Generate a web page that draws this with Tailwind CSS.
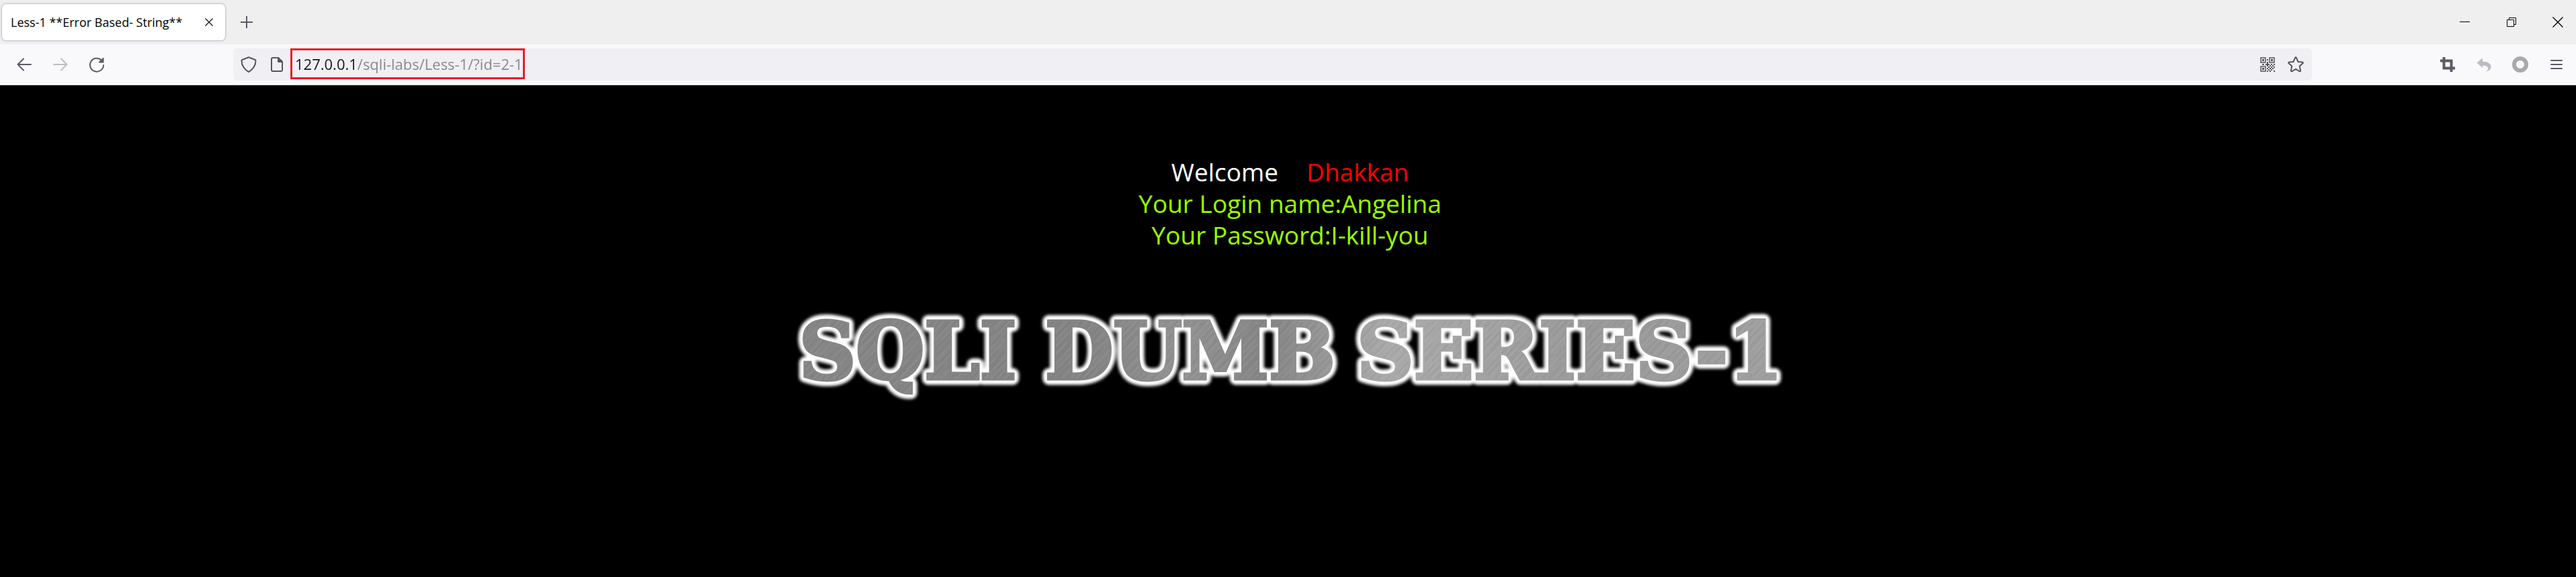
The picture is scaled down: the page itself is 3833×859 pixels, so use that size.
<!DOCTYPE html>
<html lang="en">
<head>
<meta charset="utf-8">
<title>Less-1 **Error Based- String**</title>
<script src="https://cdn.jsdelivr.net/npm/@tailwindcss/browser@4"></script>
</head>
<body class="flex min-h-screen flex-col bg-black font-['Open_Sans','Noto_Sans',sans-serif]">
<header>
  <div class="flex h-[66px] items-center bg-[#efefef] pl-[3px]">
    <div class="flex h-[54px] w-[332px] items-center justify-between rounded-md bg-white pr-3 pl-[13px] shadow-[0_0_3px_#8080a0]" role="tab" aria-selected="true">
      <span class="text-[18px] whitespace-nowrap text-black">Less-1 **Error Based- String**</span>
      <button aria-label="Close tab" class="flex size-6 items-center justify-center"><svg class="size-3" viewBox="0 0 12 12" fill="none" stroke="#15141a" stroke-width="1.3"><path d="M.5.5l11 11M11.5.5l-11 11"/></svg></button>
    </div>
    <button aria-label="New tab" class="ml-[14px] flex size-9 items-center justify-center"><svg class="size-[18px]" viewBox="0 0 18 18" fill="none" stroke="#5b5b66" stroke-width="2"><path d="M9 0v18M0 9h18"/></svg></button>
    <div class="ml-auto flex h-full items-center">
      <button aria-label="Minimize" class="flex h-full w-[69px] items-center justify-center"><svg class="size-4" viewBox="0 0 16 16" stroke="#000"><path d="M0 7.5h15"/></svg></button>
      <button aria-label="Restore" class="flex h-full w-[69px] items-center justify-center"><svg class="size-4" viewBox="0 0 16 16" fill="none" stroke="#000"><path d="M1.500 4.500h10v10h-10zM4.500 4.500v-3h10v10h-3"/></svg></button>
      <button aria-label="Close window" class="flex h-full w-[62px] items-center justify-center pl-2"><svg class="size-4" viewBox="0 0 16 16" fill="none" stroke="#000" stroke-width="1.300"><path d="M.5.5l15 15M15.500.5l-15 15"/></svg></button>
    </div>
  </div>
  <div class="flex h-[61px] items-center border-b border-[#ccc] bg-[#f9f9fb] pr-[2px]">
    <nav class="flex w-[347px] shrink-0 items-center pl-[9px] text-[#5b5b66]">
      <button aria-label="Back" class="flex h-12 w-[54px] items-center justify-center"><svg class="size-6" viewBox="0 0 24 24" fill="none" stroke="currentColor" stroke-width="2" stroke-linecap="round" stroke-linejoin="round"><path d="M22 12H2.500M11 3.500L2.500 12l8.500 8.500"/></svg></button>
      <button aria-label="Forward" disabled class="flex h-12 w-[54px] items-center justify-center text-[#bcbcc4]"><svg class="size-6" viewBox="0 0 24 24" fill="none" stroke="currentColor" stroke-width="2" stroke-linecap="round" stroke-linejoin="round"><path d="M2 12h19.500M13 3.500l8.500 8.500-8.500 8.500"/></svg></button>
      <button aria-label="Reload" class="flex h-12 w-[54px] items-center justify-center"><svg class="size-6" viewBox="0 0 24 24" fill="none" stroke="currentColor" stroke-width="2" stroke-linecap="round"><path d="M22 13A10 10 0 1 1 19 5.500"/><path fill="currentColor" stroke="none" d="M22.500 2.200v7.300h-7.300q-.9-.4-.3-1.200l6.400-6.300q.9-.5 1.200.2z"/></svg></button>
    </nav>
    <div class="flex h-12 flex-1 items-center rounded-md bg-[#f0f0f4] pr-3 pl-[11px] text-[#55555c]">
      <button aria-label="Tracking protection" class="mr-5"><svg class="size-6" viewBox="0 0 24 24" fill="none" stroke="currentColor" stroke-width="2" stroke-linejoin="round"><path d="M12 1.200L21.500 5q1 .5 1 1.500Q22.300 17 12 23.200 1.700 17 1.500 6.500q0-1 1-1.500z"/></svg></button>
      <button aria-label="Site information"><svg class="h-6 w-5" viewBox="0 0 20 24" fill="none" stroke="currentColor" stroke-width="2" stroke-linejoin="round"><path d="M4 2h8l6 6v12q0 2-2 2H4q-2 0-2-2V4q0-2 2-2z"/><path fill="currentColor" d="M12 2v6h6z"/></svg></button>
      <label class="mb-[2px] ml-[10px] flex h-[46px] w-[349px] items-center border-3 border-[#ed1c24]">
        <input aria-label="Address" value="127.0.0.1/sqli-labs/Less-1/?id=2-1" class="w-full bg-[linear-gradient(90deg,#15141a_97px,#85858a_97px)] bg-clip-text pl-1 text-[22px] text-transparent outline-none">
      </label>
      <button aria-label="QR code" class="mr-[18px] ml-auto"><svg class="size-6" viewBox="0 0 24 24" fill="none" stroke="currentColor" stroke-width="1.500"><path d="M2 2h7v7H2zM15 2h7v7h-7zM2 15h7v7H2z"/><path fill="currentColor" stroke="none" d="M4 4h3v3H4zM17 4h3v3h-3zM4 17h3v3H4zM11 4h2v2h-2zM11 8h2v3h2v2h-2v2h-2v-2H9v-2h2zM4 11h3v2H4zM17 11h2v2h-2zM21 11h2v2h-2zM15 13h2v2h-2zM19 13h2v2h-2zM13 15h2v2h-2zM17 15h2v2h-2zM21 15h2v2h-2zM11 17h2v2h-2zM15 17h2v2h-2zM19 17h2v2h-2zM13 19h2v2h-2zM17 19h2v2h-2zM11 21h2v2h-2zM15 21h2v2h-2zM21 21h2v2h-2z"/></svg></button>
      <button aria-label="Bookmark this page"><svg class="size-6" viewBox="0 0 24 24" fill="none" stroke="currentColor" stroke-width="2" stroke-linejoin="round"><path d="M11 2.200q1-1.700 2 0l2.500 5.800 6.300.6q1.800.4.600 1.700l-4.700 4.300 1.400 6.300q0 1.900-1.600 1.200L12 18.800l-5.500 3.300q-1.600.7-1.600-1.200l1.400-6.300-4.700-4.300q-1.200-1.300.6-1.700l6.300-.6z"/></svg></button>
    </div>
    <div class="ml-[175px] flex shrink-0 items-center text-[#5b5b66]">
      <button aria-label="Screenshot" class="flex h-12 w-[54px] items-center justify-center"><svg class="size-[22px]" viewBox="0 0 22 22" fill="none" stroke="currentColor" stroke-width="4"><path d="M5.500 0v16.500H22M0 5.500h16.500V22"/></svg></button>
      <button aria-label="Undo" disabled class="flex h-12 w-[54px] items-center justify-center text-[#bcbcc4]"><svg class="size-[22px]" viewBox="0 0 22 22" fill="currentColor"><path d="M9 1v5.500c7.500 0 12.500 3 12.500 8 0 4-3 6.500-8 7 3.500-1.500 4-3.500 3.500-5.500-.8-2.500-4-3.500-8-3.500V16L.5 8.500z"/></svg></button>
      <button aria-label="Extension" class="flex h-12 w-[54px] items-center justify-center"><svg class="size-6" viewBox="0 0 24 24" fill="none" stroke="#a9a9a9" stroke-width="6"><circle cx="12" cy="12" r="9"/></svg></button>
      <button aria-label="Menu" class="flex h-12 w-[54px] items-center justify-center"><svg class="size-[18px]" viewBox="0 0 18 18" fill="none" stroke="currentColor" stroke-width="2" stroke-linecap="round"><path d="M1 3h16M1 9h16M1 15h16"/></svg></button>
    </div>
  </div>
</header>
<main class="flex flex-1 flex-col items-center bg-black pt-[105px] text-center">
  <div class="pl-[6px] text-[37px] leading-[47px] text-[#99ff00]">
    <p class="text-white">Welcome<span class="ml-[42px] text-[#ff0000]">Dhakkan</span></p>
    <p>Your Login name:Angelina</p>
    <p>Your Password:I-kill-you</p>
  </div>
  <svg class="mt-[72px] h-[160px] w-[1500px] max-w-full" viewBox="0 0 1500 160" role="img" aria-label="SQLI DUMB SERIES-1">
    <defs>
      <linearGradient id="steel" gradientUnits="userSpaceOnUse" x1="0" y1="20" x2="1500" y2="120">
        <stop offset="0" stop-color="#868686"/><stop offset=".3" stop-color="#848484"/><stop offset=".4" stop-color="#929292"/><stop offset=".48" stop-color="#858585"/><stop offset=".6" stop-color="#aaaaaa"/><stop offset=".8" stop-color="#999"/><stop offset="1" stop-color="#a0a0a0"/>
      </linearGradient>
      <pattern id="brushed" width="31" height="90" patternUnits="userSpaceOnUse" patternTransform="rotate(43)">
        <path d="M3 0v55M11 30v60M20 0v90M27 15v50" stroke="#fff" stroke-opacity=".1"/>
        <path d="M6 20v70M14 0v60M17 30v60M24 0v40M30 40v50" stroke="#000" stroke-opacity=".09"/>
      </pattern>
      <filter id="glow" x="-5%" y="-30%" width="110%" height="160%"><feGaussianBlur stdDeviation="2"/></filter>
      <g id="words" font-family="'DejaVu Serif',serif" font-weight="700" font-size="117">
        <text x="22" y="119">SQLI</text><text x="388" y="119">DUMB</text><text x="852" y="119">SERIES-1</text>
      </g>
    </defs>
    <use href="#words" fill="#fff" stroke="#fff" stroke-width="18" stroke-linejoin="round" filter="url(#glow)"/>
    <use href="#words" fill="url(#steel)" stroke="url(#steel)" stroke-width="5"/>
    <use href="#words" fill="url(#brushed)"/>
  </svg>
</main>
</body>
</html>
